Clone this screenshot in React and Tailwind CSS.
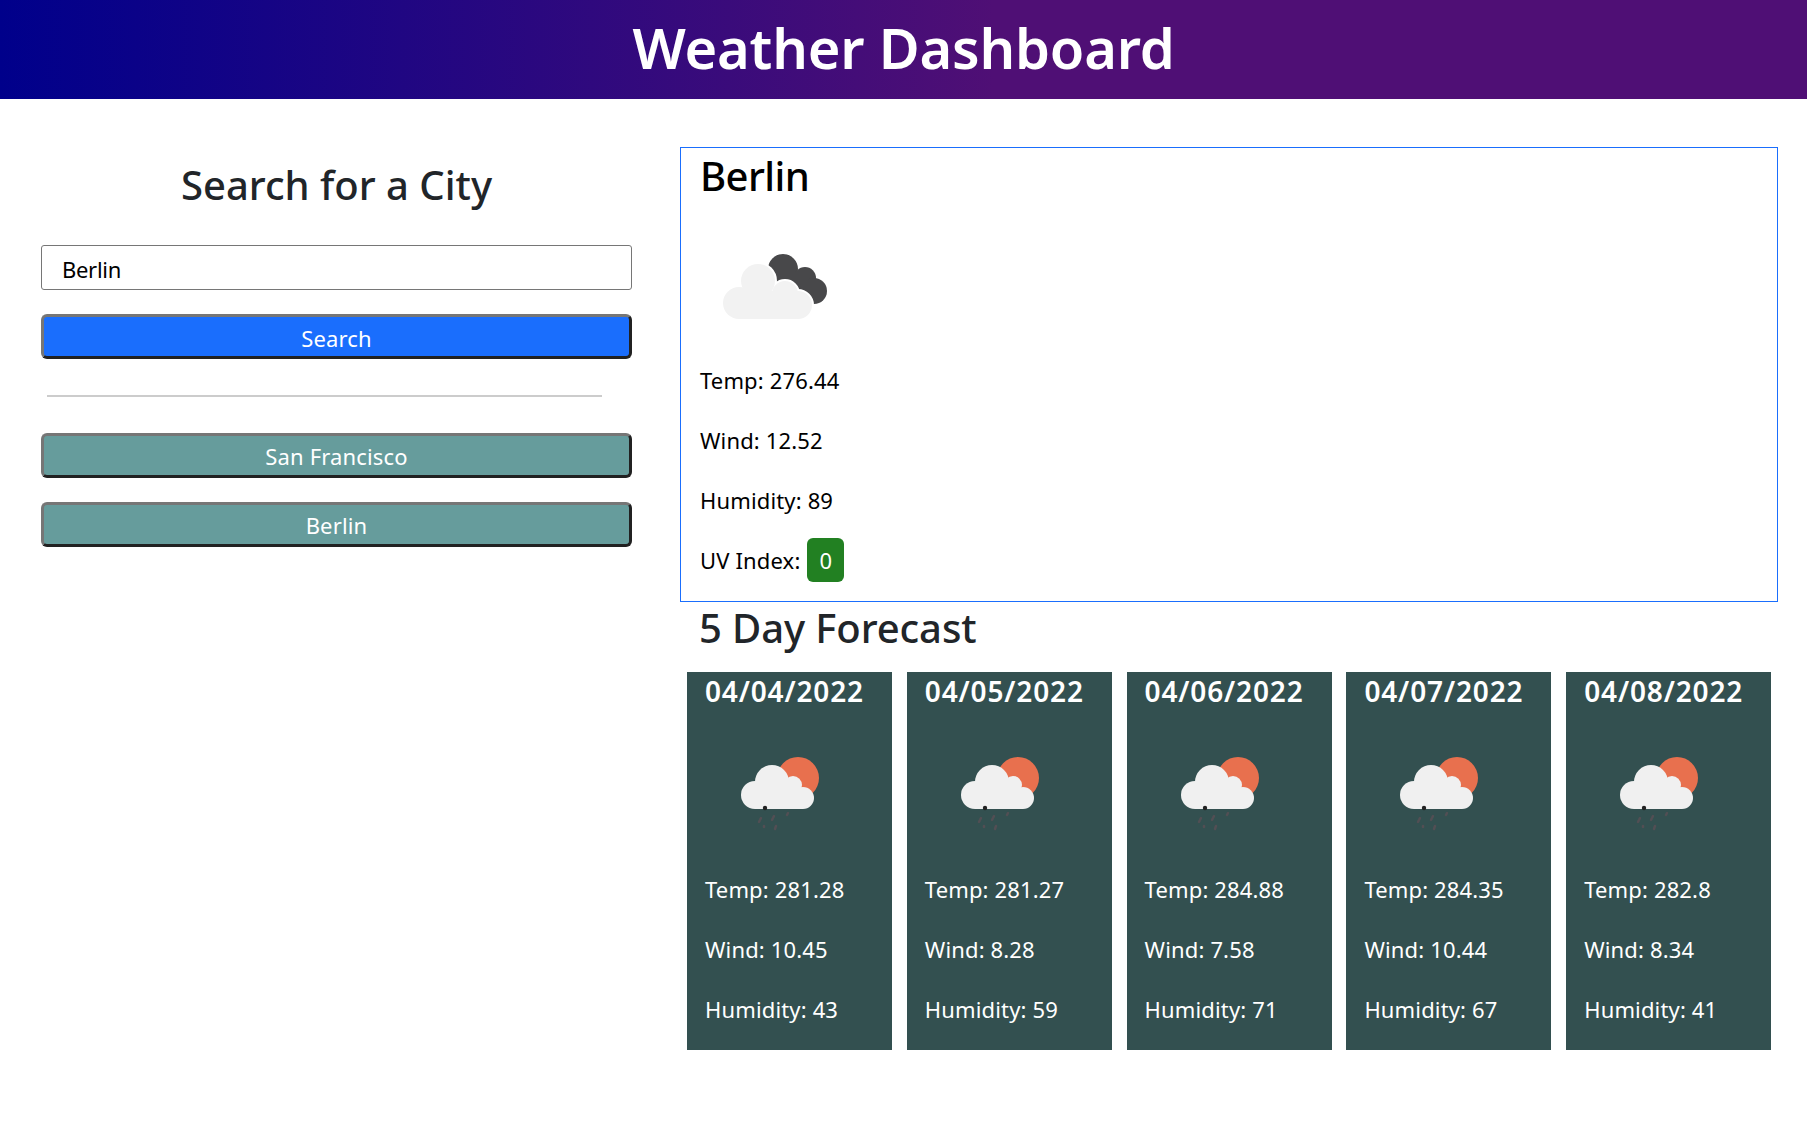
const days = [
  { date: "04/04/2022", temp: "281.28", wind: "10.45", hum: "43" },
  { date: "04/05/2022", temp: "281.27", wind: "8.28", hum: "59" },
  { date: "04/06/2022", temp: "284.88", wind: "7.58", hum: "71" },
  { date: "04/07/2022", temp: "284.35", wind: "10.44", hum: "67" },
  { date: "04/08/2022", temp: "282.8", wind: "8.34", hum: "41" },
];

function CloudIcon() {
  return (
    <svg width="130" height="100" viewBox="0 0 130 100" className="block">
      <g fill="#48484a">
        <circle cx="83" cy="38" r="15" />
        <circle cx="105" cy="47" r="11" />
        <circle cx="114" cy="60" r="13" />
        <path d="M72 30 L112 50 L112 70 L85 70 Z" />
      </g>
      <g fill="#fff" stroke="#fff" strokeWidth="4">
        <circle cx="58" cy="50" r="17" />
        <circle cx="85" cy="63" r="13" />
        <circle cx="98" cy="74" r="14" />
      </g>
      <g fill="#f2f2f2">
        <circle cx="58" cy="50" r="17" />
        <circle cx="39" cy="72" r="16" />
        <circle cx="85" cy="63" r="13" />
        <circle cx="98" cy="74" r="14" />
        <rect x="39" y="60" width="59" height="28" />
      </g>
    </svg>
  );
}

function RainIcon() {
  return (
    <svg width="100" height="100" viewBox="0 0 100 100" className="block">
      <circle cx="77" cy="39" r="21" fill="#e8704e" />
      <g fill="#f0f0f0">
        <circle cx="51" cy="43" r="17" />
        <circle cx="34" cy="56" r="14" />
        <circle cx="72" cy="46" r="9" />
        <circle cx="82" cy="59" r="11" />
        <rect x="34" y="50" width="48" height="20" />
      </g>
      <circle cx="44" cy="69" r="2.2" fill="#222" />
      <g stroke="#5a4f55" strokeWidth="2.5" strokeLinecap="round" opacity="0.8">
        <path d="M40 79 L38 83" />
        <path d="M53 77 L51 81" />
        <path d="M67 74 L66 76" />
        <path d="M43 87 L43 88" />
        <path d="M55 87 L54 90" />
      </g>
    </svg>
  );
}

export default function App() {
  return (
    <div className="min-h-[1144px] bg-white font-['Noto_Sans',sans-serif] text-[#212529]">
      <header className="h-[99px] bg-[linear-gradient(to_right,#00008b,#4f0f75_55%,#4f0f75)] flex items-center justify-center">
        <h1 className="text-white text-[56px] leading-none font-semibold tracking-[-0.2px] pb-[6px]">Weather Dashboard</h1>
      </header>
      <main className="flex pt-[48px] pl-[41px]">
        <aside className="w-[591px] shrink-0">
          <h2 className="text-[40px] leading-[48px] font-medium text-center h-[98px] pt-[14px]">Search for a City</h2>
          <input
            readOnly
            value="Berlin"
            className="block w-full h-[45px] border border-[#767676] rounded-[3px] px-[20px] pt-[2px] text-[22px] text-black tracking-[-0.3px] outline-none"
          />
          <button className="block w-full h-[45px] mt-[24px] pt-[3px] bg-[#1a6efd] text-white text-[22px] tracking-[0.15px] border-[3px] rounded-[6px] border-t-[#767676] border-l-[#767676] border-r-[#212121] border-b-[#212121]">Search</button>
          <hr className="w-[555px] ml-[6px] mt-[36px] border-0 border-t-2 border-[#cccccc]" />
          <button className="block w-full h-[45px] mt-[36px] pt-[1px] bg-[#669c9c] text-white text-[22px] tracking-[0.15px] border-[3px] rounded-[6px] border-t-[#767676] border-l-[#767676] border-r-[#212121] border-b-[#212121]">San Francisco</button>
          <button className="block w-full h-[45px] mt-[24px] pt-[1px] bg-[#669c9c] text-white text-[22px] tracking-[0.15px] border-[3px] rounded-[6px] border-t-[#767676] border-l-[#767676] border-r-[#212121] border-b-[#212121]">Berlin</button>
        </aside>
        <section className="w-[1098px] ml-[48px] shrink-0">
          <div className="h-[455px] border border-[#1a6efd] pl-[19px] text-[22px] text-black tracking-[0.15px]">
            <h2 className="text-[40px] leading-[56px] font-medium tracking-[-0.6px]">Berlin</h2>
            <div className="mt-[27px] h-[100px]"><CloudIcon /></div>
            <p className="mt-[31px] h-[36px] leading-[36px]">Temp: 276.44</p>
            <p className="mt-[24px] h-[36px] leading-[36px]">Wind: 12.52</p>
            <p className="mt-[24px] h-[36px] leading-[36px]">Humidity: 89</p>
            <p className="mt-[20px] h-[44px] flex items-center gap-[7px]">
              UV Index:
              <span className="w-[37px] h-[44px] rounded-[6px] bg-[#228022] text-white flex items-center justify-center">0</span>
            </p>
          </div>
          <h2 className="pl-[19px] text-[40px] h-[70px] leading-[52px] font-medium tracking-[-0.1px]">5 Day Forecast</h2>
          <div className="flex gap-[14.8px] pl-[7px]">
            {days.map((d) => (
              <div key={d.date} className="w-[205px] h-[378px] bg-[#335050] text-white pl-[18px] text-[22px] tracking-[0.15px]">
                <h4 className="text-[28px] leading-[38px] font-semibold tracking-[0.85px]">{d.date}</h4>
                <div className="mt-[29px] ml-[16px] h-[100px]"><RainIcon /></div>
                <p className="mt-[32px] h-[36px] leading-[36px]">Temp: {d.temp}</p>
                <p className="mt-[24px] h-[36px] leading-[36px]">Wind: {d.wind}</p>
                <p className="mt-[24px] h-[36px] leading-[36px]">Humidity: {d.hum}</p>
              </div>
            ))}
          </div>
        </section>
      </main>
    </div>
  );
}
